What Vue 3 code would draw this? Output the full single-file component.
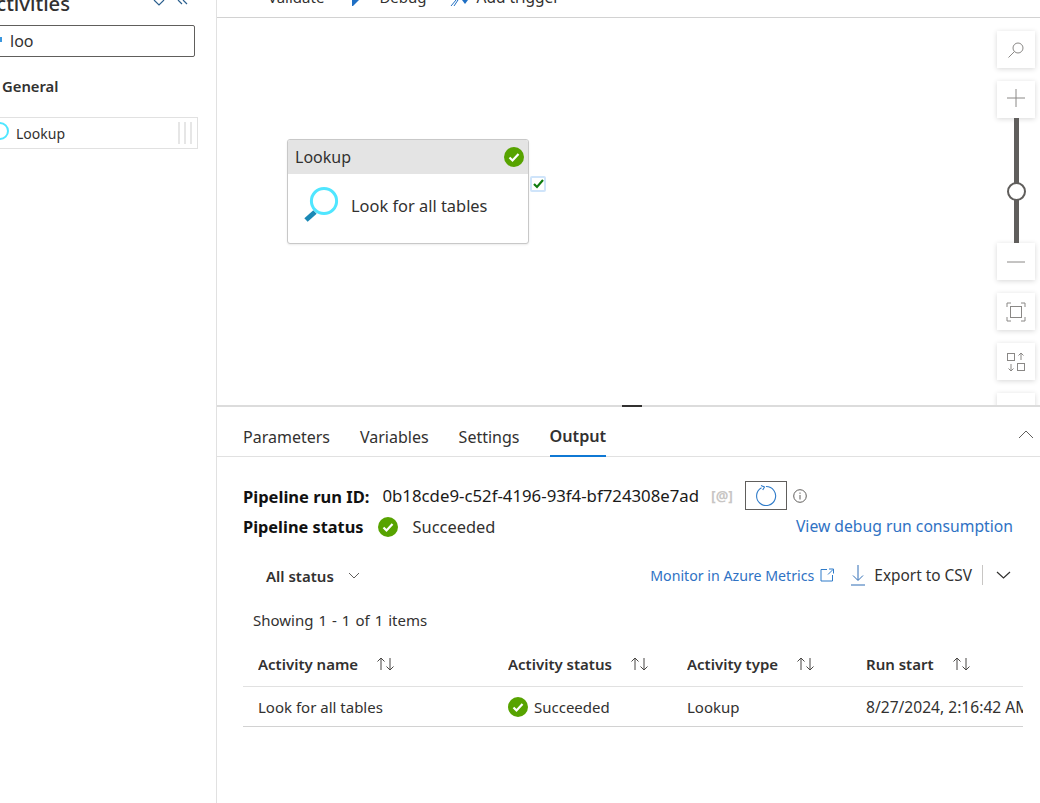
<template>
  <div class="page">
    <aside class="sidebar">
      <div class="sidebar-inner">
        <div class="side-head">
          <h2>Activities</h2>
          <svg class="head-icon" width="36" height="10" viewBox="0 0 36 10" fill="none" stroke="#2b5f8e" stroke-width="1.2">
            <path d="M1 2l5 5 5-5" />
            <path d="M25 2l4 4M30 2l4 4" />
          </svg>
        </div>
        <div class="search">
          <span class="search-dot"></span>
          <span>loo</span>
        </div>
        <div class="group">General</div>
        <div class="activity">
          <span class="ring"></span>
          <span class="activity-name">Lookup</span>
          <span class="grip"><i></i><i></i><i></i></span>
        </div>
      </div>
    </aside>

    <main class="main">
      <div class="toolbar">
        <span class="tool">Validate</span>
        <svg class="tool-icon" width="10" height="6" viewBox="0 0 10 6"><path d="M2 0h7L3 6H2z" fill="#1f6fc4" /></svg>
        <span class="tool">Debug</span>
        <svg class="tool-icon-2" width="20" height="6" viewBox="0 0 20 6"><path d="M1 6l5-6M7 0h1L4 6" stroke="#1f6fc4" fill="none" /><path d="M12 0h6l-3 4z" fill="#1f6fc4" /></svg>
        <span class="tool tool-add">Add trigger</span>
      </div>

      <section class="canvas">
        <div class="node">
          <div class="node-head">
            <span>Lookup</span>
            <svg width="20" height="20" viewBox="0 0 20 20"><circle cx="10" cy="10" r="10" fill="#57a300" /><path d="M5.500 10.500l3 3 6-6.500" fill="none" stroke="#fff" stroke-width="2.200" /></svg>
          </div>
          <div class="node-body">
            <svg width="38" height="38" viewBox="0 0 38 38" fill="none">
              <path d="M3 34l9-8" stroke="#1a88b5" stroke-width="5" />
              <circle cx="21" cy="15" r="12.600" stroke="#50e6ff" stroke-width="3" />
            </svg>
            <span>Look for all tables</span>
          </div>
          <span class="node-port">
            <svg width="11" height="10" viewBox="0 0 11 10"><path d="M1 5l3 3 6-7" fill="none" stroke="#107c10" stroke-width="2.200" /></svg>
          </span>
        </div>

        <div class="zoom-tools">
          <button class="zoom-btn">
            <svg width="18" height="18" viewBox="0 0 18 18" fill="none" stroke="#8a8886"><circle cx="11" cy="7" r="5" /><path d="M7.500 10.500L1.500 16.500" /></svg>
          </button>
          <button class="zoom-btn zoom-gap zoom-plus">
            <svg width="20" height="20" viewBox="0 0 20 20" stroke="#8a8886"><path d="M10 1v18M1 10h18" /></svg>
          </button>
          <div class="zoom-track"><span class="zoom-thumb"></span></div>
          <button class="zoom-btn">
            <svg width="20" height="20" viewBox="0 0 20 20" stroke="#8a8886"><path d="M1 10h18" /></svg>
          </button>
          <button class="zoom-btn zoom-gap">
            <svg width="20" height="20" viewBox="0 0 20 20" fill="none" stroke="#8a8886"><path d="M1 5V1h4M15 1h4v4M19 15v4h-4M5 19H1v-4" /><rect x="4.500" y="4.500" width="11" height="11" /></svg>
          </button>
          <button class="zoom-btn zoom-gap">
            <svg width="20" height="20" viewBox="0 0 20 20" fill="none" stroke="#8a8886"><rect x="1.500" y="1.500" width="7" height="7" /><rect x="11.500" y="11.500" width="7" height="7" /><path d="M15 8V1M12.500 3.500L15 1l2.500 2.500M5 12v7M2.500 16.500L5 19l2.500-2.500" /></svg>
          </button>
          <button class="zoom-btn zoom-gap"></button>
        </div>
      </section>

      <section class="panel">
        <span class="panel-handle"></span>
        <nav class="tabs">
          <span v-for="tab in tabs" :key="tab" class="tab" :class="{ active: tab === 'Output' }">{{ tab }}</span>
          <svg class="collapse" width="16" height="9" viewBox="0 0 16 9" fill="none" stroke="#605e5c"><path d="M1 8l7-7 7 7" /></svg>
        </nav>

        <div class="run-line">
          <strong class="run-label">Pipeline run ID:</strong>
          <span class="run-id">0b18cde9-c52f-4196-93f4-bf724308e7ad</span>
          <span class="copy">[@]</span>
          <button class="refresh">
            <svg width="22" height="22" viewBox="0 0 22 22" fill="none" stroke="#2f7bc9" stroke-width="1.100"><path d="M6.500 2.700A9.500 9.500 0 1 0 11 1.500" /><path d="M6 0.500l3.500 1.500-1.800 3" /></svg>
          </button>
          <svg class="info" width="14" height="14" viewBox="0 0 14 14" fill="none" stroke="#605e5c"><circle cx="7" cy="7" r="6.300" /><path d="M7 6v4.500M7 3.500v1.300" /></svg>
        </div>

        <div class="status-line">
          <strong class="status-label">Pipeline status</strong>
          <svg width="20" height="20" viewBox="0 0 20 20"><circle cx="10" cy="10" r="10" fill="#57a300" /><path d="M5.500 10.500l3 3 6-6.500" fill="none" stroke="#fff" stroke-width="2.200" /></svg>
          <span class="status-text">Succeeded</span>
          <a class="consumption">View debug run consumption</a>
        </div>

        <div class="actions">
          <span class="filter">All status</span>
          <svg width="12" height="7" viewBox="0 0 12 7" fill="none" stroke="#605e5c"><path d="M1 1l5 5 5-5" /></svg>
          <a class="metrics">Monitor in Azure Metrics</a>
          <svg class="open-icon" width="14" height="14" viewBox="0 0 14 14" fill="none" stroke="#2f7bc9"><path d="M7 1.500H1v11.500h11.500V7M8 6.500l5-5M9 1h4.500v4.500" /></svg>
          <svg class="export-icon" width="14" height="21" viewBox="0 0 14 21" fill="none" stroke="#2f6db5"><path d="M7 0v15M2 10.500L7 15.500l5-5M0 20h14" /></svg>
          <span class="export">Export to CSV</span>
          <span class="divider"></span>
          <svg class="more" width="15" height="8" viewBox="0 0 15 8" fill="none" stroke="#323130" stroke-width="1.200"><path d="M1 1l6.500 6L14 1" /></svg>
        </div>

        <div class="showing">Showing 1 - 1 of 1 items</div>

        <div class="grid">
          <div class="row row-head">
            <div v-for="col in columns" :key="col" class="cell">
              <span>{{ col }}</span>
              <svg class="sort" width="19" height="14" viewBox="0 0 19 14" fill="none" stroke="#484644"><path d="M5 13V1M1.500 4.500L5 1l3.500 3.500M14 1v12M10.500 9.500L14 13l3.500-3.500" /></svg>
            </div>
          </div>
          <div class="row">
            <div class="cell">Look for all tables</div>
            <div class="cell">
              <svg class="row-check" width="20" height="20" viewBox="0 0 20 20"><circle cx="10" cy="10" r="10" fill="#57a300" /><path d="M5.500 10.500l3 3 6-6.500" fill="none" stroke="#fff" stroke-width="2.200" /></svg>
              <span>Succeeded</span>
            </div>
            <div class="cell">Lookup</div>
            <div class="cell date">8/27/2024, 2:16:42 AM</div>
          </div>
        </div>
      </section>
    </main>
  </div>
</template>

<script setup>
const tabs = ['Parameters', 'Variables', 'Settings', 'Output']
const columns = ['Activity name', 'Activity status', 'Activity type', 'Run start']
</script>

<style>
html, body {
  margin: 0;
  height: 100%;
  overflow: hidden;
  background: #fff;
}
</style>

<style scoped>
.page {
  display: flex;
  width: 1040px;
  height: 803px;
  overflow: hidden;
  font-family: "Noto Sans", "Open Sans", sans-serif;
  color: #323130;
  font-size: 14px;
}

.sidebar {
  width: 216px;
  flex: none;
  border-right: 1px solid #e1e1e1;
  overflow: hidden;
}

.sidebar-inner {
  margin: -9px 0 0 -17px;
  width: 215px;
}

.side-head {
  display: flex;
  align-items: center;
  height: 24px;
}

.side-head h2 {
  margin: 0;
  font-size: 20.200px;
  font-weight: 500;
  line-height: 24px;
}

.head-icon {
  margin-left: 83px;
}

.search {
  position: relative;
  display: flex;
  align-items: center;
  height: 30px;
  width: 184px;
  margin: 10px 0 0 -26px;
  padding-left: 52px;
  border: 1px solid #605e5c;
  border-radius: 2px;
  font-size: 16px;
}

.search-dot {
  position: absolute;
  left: 42px;
  top: 11px;
  width: 2px;
  height: 5px;
  background: #3a96dd;
}

.group {
  font-size: 14.800px;
  font-weight: 600;
  margin: 19px 0 0 19px;
  line-height: 20px;
}

.activity {
  display: flex;
  align-items: center;
  height: 30px;
  margin-top: 21px;
  border: 1px solid #e1e1e1;
  width: 213px;
}

.ring {
  width: 14px;
  height: 14px;
  margin: -4px 0 0 7px;
  border: 2px solid #50e6ff;
  border-radius: 50%;
  flex: none;
}

.activity-name {
  margin-left: 7px;
}

.grip {
  display: flex;
  gap: 4px;
  margin-left: auto;
  margin-right: 5px;
  height: 22px;
}

.grip i {
  width: 2px;
  background: #e6e6e6;
}

.main {
  flex: 1;
  min-width: 0;
  display: flex;
  flex-direction: column;
}

.toolbar {
  height: 17px;
  flex: none;
  display: flex;
  align-items: flex-end;
  border-bottom: 1px solid #d2d2d2;
  overflow: hidden;
  padding-left: 51px;
}

.tool {
  font-size: 15px;
  line-height: 20px;
  margin-bottom: 10px;
}

.tool-add {
  font-size: 15.500px;
}

.tool-icon {
  margin: 0 19px 11px 26px;
}

.tool-icon-2 {
  margin: 0 7px 11px 23px;
}

.canvas {
  position: relative;
  height: 387px;
  flex: none;
  overflow: hidden;
  border-bottom: 2px solid #dcdcdc;
}

.node {
  position: absolute;
  left: 70px;
  top: 121px;
  width: 240px;
  height: 103px;
  border: 1px solid #c8c8c8;
  border-radius: 3px;
  background: #fff;
  box-shadow: 0 1px 2px rgba(0, 0, 0, 0.08);
}

.node-head {
  display: flex;
  align-items: center;
  justify-content: space-between;
  height: 34px;
  padding: 0 4px 0 7px;
  background: #e4e4e4;
  font-size: 16px;
  border-radius: 2px 2px 0 0;
}

.node-body {
  display: flex;
  align-items: center;
  gap: 10px;
  height: 62px;
  padding-left: 15px;
  font-size: 16.400px;
}

.node-port {
  position: absolute;
  left: 242px;
  top: 36px;
  width: 16px;
  height: 16px;
  display: flex;
  align-items: center;
  justify-content: center;
  background: #fff;
  border: 2px solid #cfe4fa;
  border-radius: 2px;
  box-sizing: border-box;
}

.zoom-tools {
  position: absolute;
  top: 13px;
  left: 780px;
  width: 38px;
  display: flex;
  flex-direction: column;
  align-items: center;
}

.zoom-btn {
  width: 38px;
  height: 37px;
  flex: none;
  padding: 0;
  border: 0;
  background: #fff;
  display: flex;
  align-items: center;
  justify-content: center;
  box-shadow: 0 1px 5px rgba(0, 0, 0, 0.16);
}

.zoom-plus svg {
  margin-bottom: 3px;
}

.zoom-gap {
  margin-top: 13px;
}

.zoom-track {
  position: relative;
  width: 5px;
  height: 125px;
  background: #605e5c;
}

.zoom-thumb {
  position: absolute;
  left: -7px;
  top: 64px;
  width: 15px;
  height: 15px;
  border: 2px solid #605e5c;
  border-radius: 50%;
  background: #fff;
}

.panel {
  position: relative;
  flex: 1;
  padding: 0 17px 0 26px;
}

.panel-handle {
  position: absolute;
  left: 405px;
  top: -2px;
  width: 20px;
  height: 2px;
  background: #323130;
}

.tabs {
  position: relative;
  display: flex;
  gap: 30px;
  align-items: stretch;
  height: 49px;
  margin: 0 -17px 0 -26px;
  padding-left: 26px;
  border-bottom: 1px solid #e1e1e1;
}

.tab {
  display: flex;
  align-items: center;
  padding-top: 9px;
  box-sizing: border-box;
  font-size: 16px;
  height: 50px;
}

.tab.active {
  font-size: 16.200px;
  font-weight: 600;
  border-bottom: 2px solid #0f78d4;
}

.collapse {
  position: absolute;
  right: 6px;
  top: 23px;
}

.run-line {
  display: flex;
  align-items: center;
  margin-top: 24px;
  height: 29px;
}

.run-label {
  margin-top: 1px;
  font-size: 16.500px;
  font-weight: 700;
  color: #111;
}

.run-id {
  font-size: 16.800px;
  color: #1b1a19;
  margin-left: 13px;
}

.copy {
  margin-left: 12px;
  font-size: 14px;
  font-weight: 700;
  color: #c8c6c4;
}

.refresh {
  width: 42px;
  height: 29px;
  margin-left: 12px;
  border: 1px solid #605e5c;
  background: #fff;
  padding: 0;
  display: flex;
  align-items: center;
  justify-content: center;
  box-sizing: border-box;
}

.info {
  margin-left: 6px;
}

.status-line {
  display: flex;
  align-items: center;
  height: 30px;
  margin-top: 2px;
}

.status-label {
  margin-right: 14px;
  font-size: 16.350px;
  font-weight: 700;
  color: #111;
}

.status-text {
  margin: -1px 0 0 15px;
  font-size: 16.400px;
}

.consumption {
  margin: -2px 10px 0 auto;
  font-size: 15.700px;
  color: #2f72c4;
}

.actions {
  display: flex;
  align-items: center;
  margin-top: 19px;
  height: 28px;
  padding-left: 23px;
}

.filter {
  margin: 1px 14px 0 0;
  font-size: 15px;
  font-weight: 600;
}

.metrics {
  margin: 1px 0 0 auto;
  font-size: 14.200px;
  color: #2f72c4;
}

.open-icon {
  margin-left: 6px;
}

.export-icon {
  margin-left: 17px;
}

.export {
  margin-left: 9px;
  font-size: 15.400px;
}

.divider {
  width: 1px;
  height: 20px;
  background: #c8c6c4;
  margin-left: 10px;
}

.more {
  margin: 0 12px 0 13px;
}

.showing {
  margin: 19px 0 0 10px;
  height: 24px;
  line-height: 24px;
  font-size: 15px;
  word-spacing: 1.100px;
}

.grid {
  margin-top: 10px;
  width: 780px;
  overflow: hidden;
}

.row {
  display: grid;
  grid-template-columns: 250px 179px 179px 172px;
  height: 38px;
  padding: 1px 0 0 15px;
  font-size: 15px;
  border-bottom: 1px solid #d2d2d2;
  align-items: center;
  white-space: nowrap;
}

.row-head {
  height: 44px;
  padding-top: 0;
  border-bottom-color: #e1e1e1;
  font-weight: 600;
}

.cell {
  display: flex;
  align-items: center;
  overflow: hidden;
}

.date {
  font-size: 15.600px;
}

.sort {
  margin-left: 18px;
  flex: none;
}

.row-check {
  margin-right: 6px;
  flex: none;
}
</style>
